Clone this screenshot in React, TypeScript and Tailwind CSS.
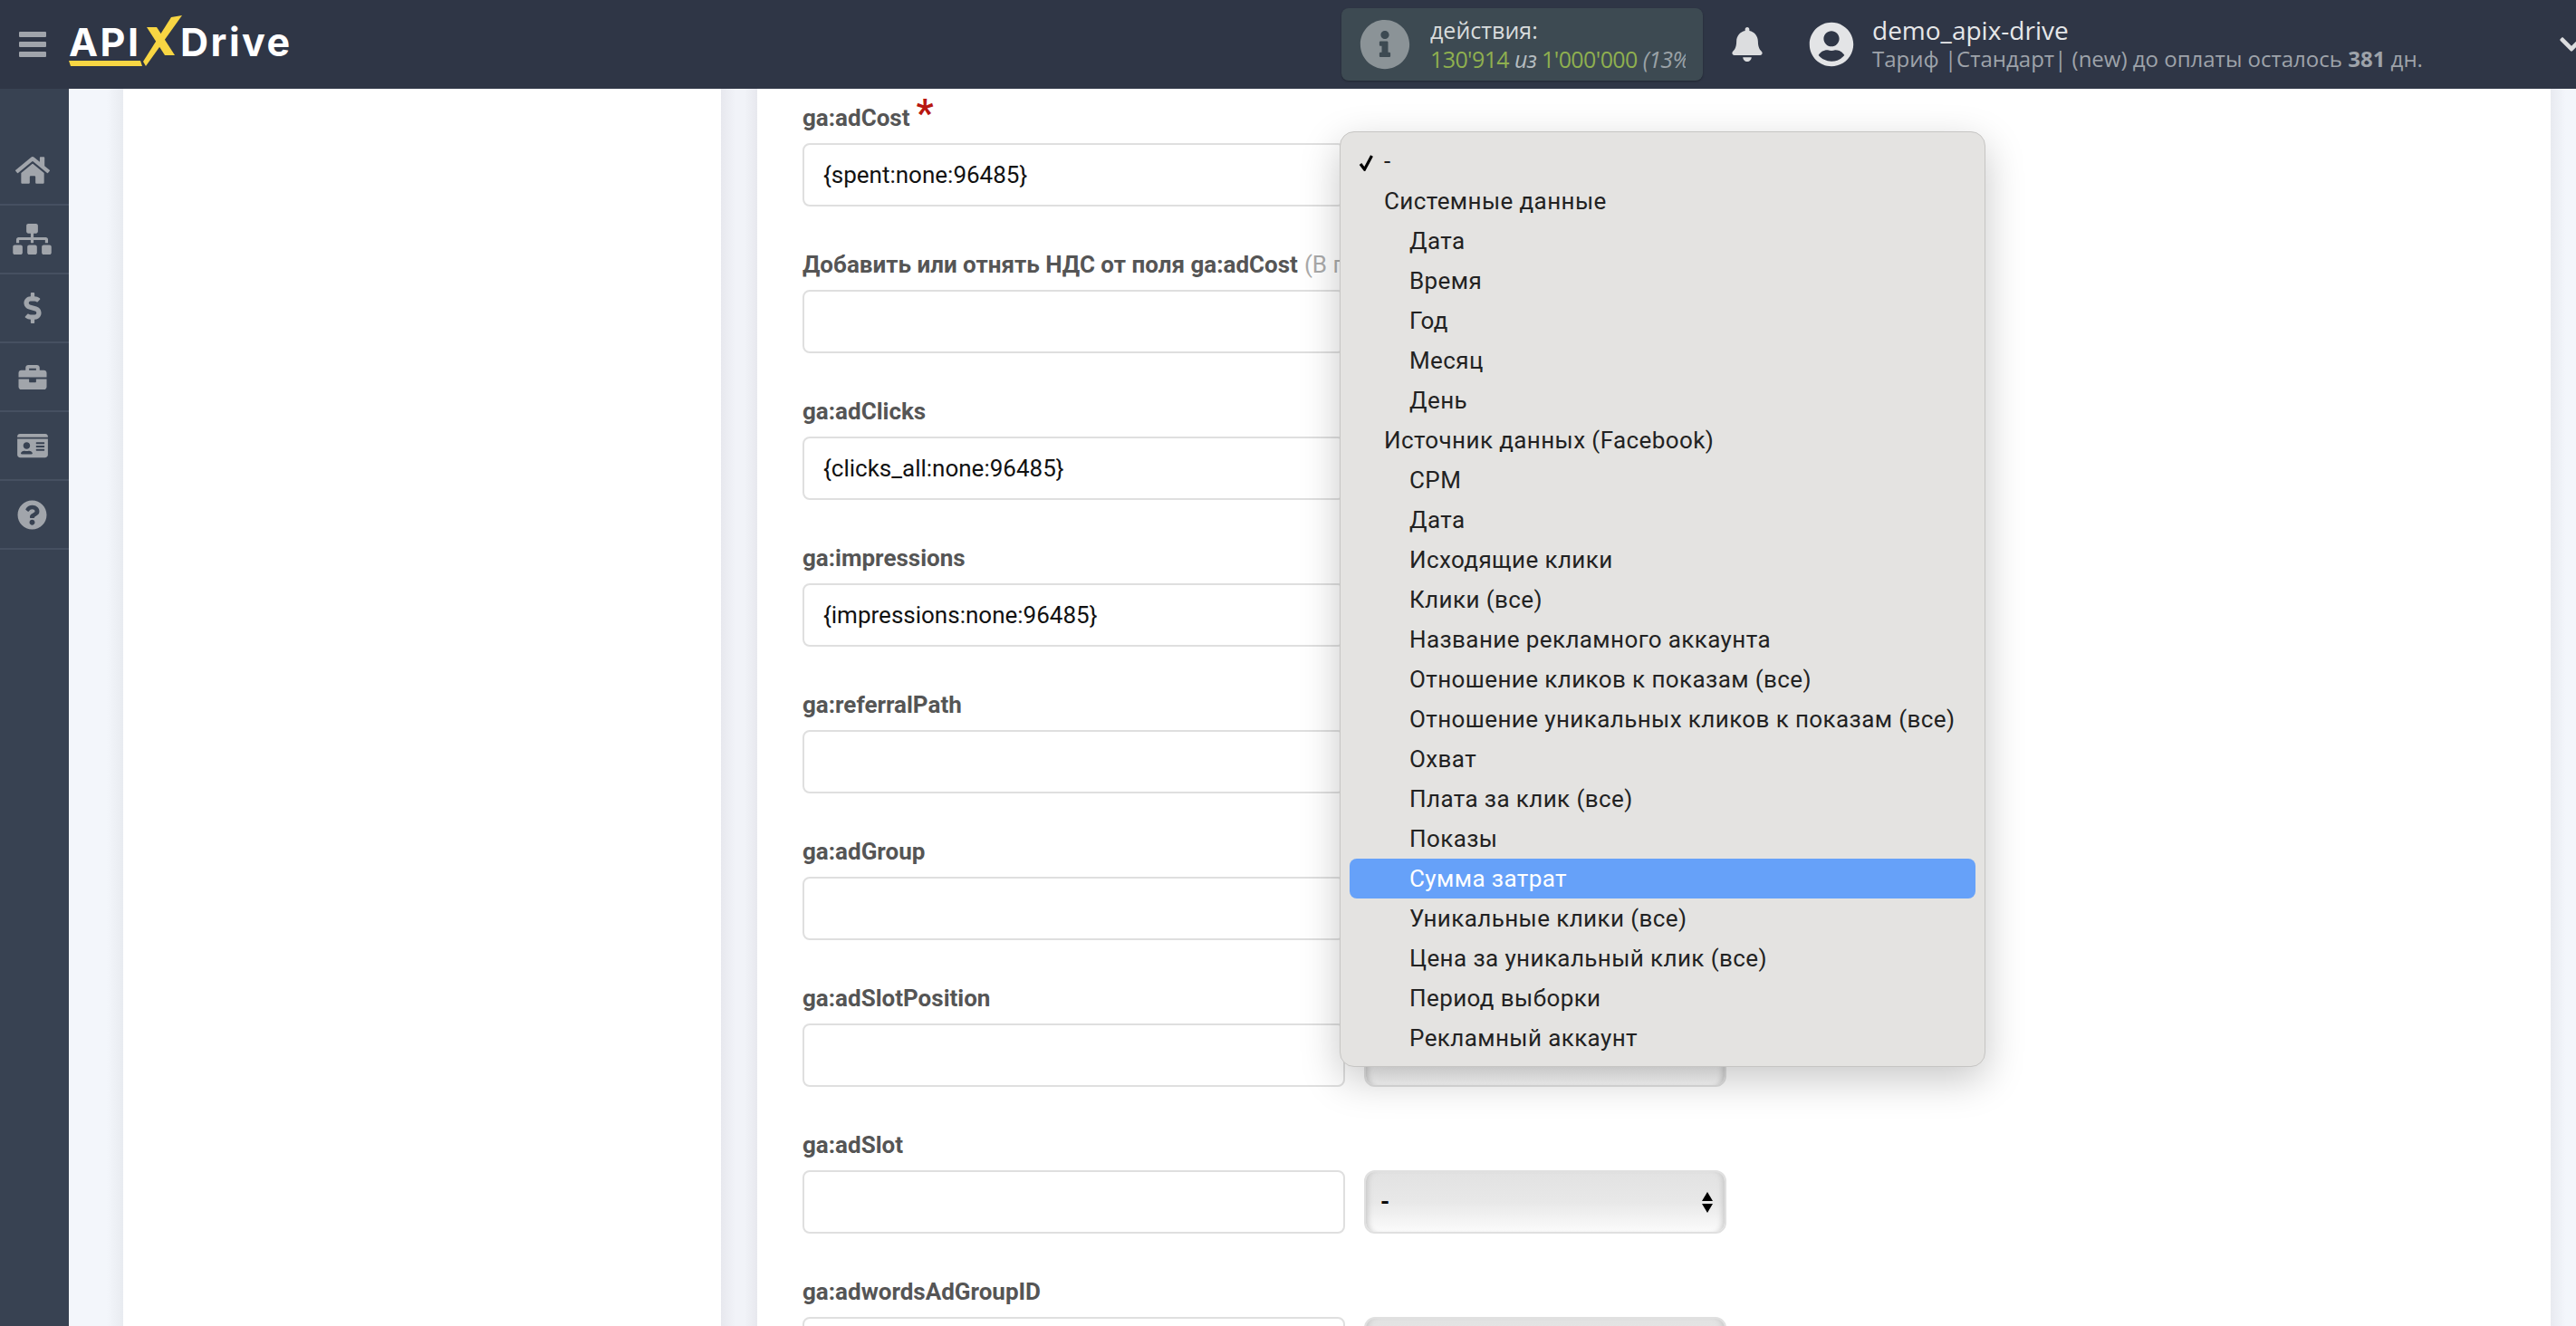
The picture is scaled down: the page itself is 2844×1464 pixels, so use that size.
import React from "react";
import { FaHome, FaSitemap, FaDollarSign, FaBriefcase, FaIdCard, FaQuestionCircle, FaBell, FaUserCircle, FaInfoCircle, FaChevronDown } from "react-icons/fa";

const navIcons = [
  { I: FaHome, c: "w-[38px] h-[34px]" },
  { I: FaSitemap, c: "w-[43px] h-[34px]" },
  { I: FaDollarSign, c: "w-[20px] h-[34px]" },
  { I: FaBriefcase, c: "w-[34px] h-[31px]" },
  { I: FaIdCard, c: "w-[38px] h-[30px]" },
  { I: FaQuestionCircle, c: "w-[33px] h-[33px]" },
];

const rows = [
  { label: "ga:adCost", value: "{spent:none:96485}", star: true },
  { label: "Добавить или отнять НДС от поля ga:adCost", hint: "(В процентах)", value: "" },
  { label: "ga:adClicks", value: "{clicks_all:none:96485}" },
  { label: "ga:impressions", value: "{impressions:none:96485}" },
  { label: "ga:referralPath", value: "" },
  { label: "ga:adGroup", value: "" },
  { label: "ga:adSlotPosition", value: "" },
  { label: "ga:adSlot", value: "" },
  { label: "ga:adwordsAdGroupID", value: "" },
];

const menu: { t: string; lvl: 0 | 1 | 2; check?: boolean; on?: boolean }[] = [
  { t: "-", lvl: 0, check: true },
  { t: "Системные данные", lvl: 1 },
  { t: "Дата", lvl: 2 },
  { t: "Время", lvl: 2 },
  { t: "Год", lvl: 2 },
  { t: "Месяц", lvl: 2 },
  { t: "День", lvl: 2 },
  { t: "Источник данных (Facebook)", lvl: 1 },
  { t: "CPM", lvl: 2 },
  { t: "Дата", lvl: 2 },
  { t: "Исходящие клики", lvl: 2 },
  { t: "Клики (все)", lvl: 2 },
  { t: "Название рекламного аккаунта", lvl: 2 },
  { t: "Отношение кликов к показам (все)", lvl: 2 },
  { t: "Отношение уникальных кликов к показам (все)", lvl: 2 },
  { t: "Охват", lvl: 2 },
  { t: "Плата за клик (все)", lvl: 2 },
  { t: "Показы", lvl: 2 },
  { t: "Сумма затрат", lvl: 2, on: true },
  { t: "Уникальные клики (все)", lvl: 2 },
  { t: "Цена за уникальный клик (все)", lvl: 2 },
  { t: "Период выборки", lvl: 2 },
  { t: "Рекламный аккаунт", lvl: 2 },
];

function Logo() {
  return (
    <div className="relative ml-[25px] flex h-[98px] w-[243px] shrink-0 items-center font-['Inter',sans-serif] text-[43px] font-bold leading-none text-white">
      <span className="absolute left-0 top-[25px] tracking-[2.5px]">API</span>
      <span className="absolute left-[123px] top-[25px] tracking-[2.5px]">Drive</span>
      <svg className="absolute left-[-77px] top-0 h-[98px] w-[320px]" viewBox="0 0 320 98" fill="#f8d643">
        <polygon points="202,17 190,19 159,68 162,73" />
        <polygon points="163,30 174,30 194,61 183,61" />
        <polygon points="77,67 156,67 158,73 79,73" />
      </svg>
    </div>
  );
}

function Header() {
  return (
    <header className="flex h-[98px] shrink-0 items-center overflow-hidden bg-[#2f3646] font-['Open_Sans',sans-serif]">
      <div className="ml-[21px] flex w-[30px] shrink-0 flex-col gap-[5px]">
        <div className="h-[6px] rounded-[1px] bg-[#a0a4ab]" />
        <div className="h-[6px] rounded-[1px] bg-[#a0a4ab]" />
        <div className="h-[6px] rounded-[1px] bg-[#a0a4ab]" />
      </div>
      <Logo />
      <div className="ml-[1162px] flex h-[80px] w-[399px] shrink-0 items-center rounded-[8px] bg-[#3d4a52] pl-[20px] shadow-[0_1px_2px_rgba(0,0,0,0.3)]">
        <FaInfoCircle className="h-[56px] w-[56px] shrink-0 text-[#8b9397]" />
        <div className="ml-[22px] w-[282px] overflow-hidden whitespace-nowrap leading-[32px]">
          <div className="text-[25px] text-[#d9dcdd]">действия:</div>
          <div className="text-[25px] tracking-[-0.6px] text-[#8fb04f]">
            130'914 <i className="text-[#b5bcc0]">из</i> 1'000'000 <i className="text-[#9aa2a7]">(13%)</i>
          </div>
        </div>
      </div>
      <FaBell className="ml-[32px] h-[38px] w-[34px] shrink-0 text-[#dcdddf]" />
      <FaUserCircle className="ml-[51px] h-[50px] w-[50px] shrink-0 text-[#e3e4e6]" />
      <div className="ml-[20px] flex-1 whitespace-nowrap leading-[32px]">
        <div className="text-[28px] text-[#e6e7e9]">demo_apix-drive</div>
        <div className="text-[24px] text-[#9ea3aa]">
          Тариф |Стандарт| (new) до оплаты осталось <b>381</b> дн.
        </div>
      </div>
      <FaChevronDown className="-mr-[8px] h-[30px] w-[26px] shrink-0 text-[#dcdddf]" />
    </header>
  );
}

function Sidebar() {
  return (
    <aside className="w-[76px] shrink-0 bg-[#384252] pt-[53px]">
      {navIcons.map(({ I, c }, i) => (
        <div key={i} className="flex h-[76px] items-center justify-center border-b-2 border-[#465061] pr-[5px]">
          <I className={`${c} text-[#a1a5ab]`} />
        </div>
      ))}
    </aside>
  );
}

function Row({ r }: { r: (typeof rows)[number] }) {
  return (
    <div className="pb-[46px] pt-[2px]">
      <div className="mb-[12px] flex h-[32px] items-center whitespace-nowrap text-[26px] font-bold leading-[32px] text-[#555555]">
        {r.label}
        {r.star && <span className="-mt-[10px] ml-[7px] text-[42px] leading-none text-[#b8170f]">*</span>}
        {r.hint && <span className="ml-[7px] font-normal text-[#aaaaaa]">{r.hint}</span>}
      </div>
      <div className="flex gap-[21px]">
        <div className="flex h-[70px] w-[599px] items-center rounded-[8px] border-2 border-[#dfdfdf] bg-white pl-[21px] text-[26px] text-[#111111]">
          {r.value}
        </div>
        <div className="flex h-[70px] w-[400px] items-center justify-between rounded-[12px] border-2 border-[#e0e0e0] bg-[linear-gradient(to_bottom,#e2e2e2_0%,#e8e8e8_50%,#fbfbfb_100%)] pl-[16px] pr-[13px] text-[26px] font-bold text-black shadow-[inset_7px_0_6px_-5px_#c6c6c6,inset_-7px_0_6px_-5px_#c6c6c6]">
          <span>-</span>
          <span className="flex flex-col gap-[3px]">
            <span className="h-0 w-0 border-x-[6px] border-b-[10px] border-x-transparent border-b-black" />
            <span className="h-0 w-0 border-x-[6px] border-t-[10px] border-x-transparent border-t-black" />
          </span>
        </div>
      </div>
    </div>
  );
}

function Dropdown() {
  return (
    <div className="absolute left-[1479px] top-[145px] w-[713px] rounded-[16px] border border-[#c6c5c3] bg-[#e4e3e1] pb-[9px] pt-[10px] font-['Roboto',sans-serif] text-[26px] tracking-[0.4px] text-[#222222] shadow-[0_14px_44px_rgba(0,0,0,0.22)]">
      {menu.map((m, i) => (
        <div
          key={i}
          className={`relative mx-[10px] flex h-[44px] items-center whitespace-nowrap rounded-[8px] ${m.lvl === 2 ? "pl-[66px]" : "pl-[38px]"} ${m.on ? "bg-[#66a1f9] text-white" : ""}`}
        >
          {m.check && (
            <svg className="absolute left-[10px] top-[14px] h-[19px] w-[17px]" viewBox="0 0 17 19" fill="none" stroke="#000" strokeWidth="3.2">
              <path d="M2 11 L6.5 17 L14.5 2" />
            </svg>
          )}
          {m.t}
        </div>
      ))}
    </div>
  );
}

export default function App() {
  return (
    <div className="relative h-[1464px] w-[2844px] overflow-hidden bg-[#f3f6fb] font-['Roboto',sans-serif]">
      <Header />
      <div className="flex h-[1366px] overflow-hidden">
        <Sidebar />
        <div className="flex flex-1">
          <div className="w-[60px] shrink-0 bg-[linear-gradient(to_right,#f3f6fb_70%,#e8ebf0_100%)]" />
          <div className="w-[660px] shrink-0 bg-white" />
          <div className="w-[40px] shrink-0 bg-[linear-gradient(to_right,#e7e8ee_0%,#f1f3f8_40%,#f1f3f8_65%,#e7e8ee_100%)]" />
          <main className="w-[1980px] shrink-0 bg-white pl-[50px] pt-[14px]">
            {rows.map((r) => (
              <Row key={r.label} r={r} />
            ))}
          </main>
          <div className="flex-1 bg-[linear-gradient(to_right,#e8eaf0_0%,#f3f6fb_60%)]" />
        </div>
      </div>
      <Dropdown />
    </div>
  );
}
